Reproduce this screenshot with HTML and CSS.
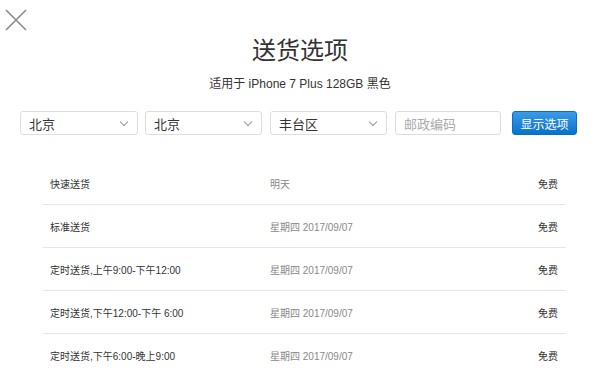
FILE: index.html
```html
<!DOCTYPE html>
<html lang="zh-CN">
<head>
  <meta charset="UTF-8" />
  <title>送货选项</title>
  <link rel="stylesheet" href="styles.css">
</head>
<body>
  <a class="close" href="#" aria-label="关闭">
    <svg width="22" height="22" viewBox="0 0 22 22">
      <path d="M1 1 L21 21 M21 1 L1 21" stroke="#8a8a8a" stroke-width="1.6" fill="none" />
    </svg>
  </a>

  <h1>送货选项</h1>
  <p class="sub">适用于 iPhone 7 Plus 128GB 黑色</p>

  <div class="form">
    <div class="select w1"><span>北京</span><i class="chev"></i></div>
    <div class="select w2"><span>北京</span><i class="chev"></i></div>
    <div class="select w2 w3"><span>丰台区</span><i class="chev"></i></div>
    <div class="input">邮政编码</div>
    <button class="btn">显示选项</button>
  </div>

  <table>
    <tbody>
      <tr><td>快速送货</td><td class="date">明天</td><td class="fee">免费</td></tr>
      <tr><td>标准送货</td><td class="date">星期四 2017/09/07</td><td class="fee">免费</td></tr>
      <tr><td>定时送货,上午9:00-下午12:00</td><td class="date">星期四 2017/09/07</td><td class="fee">免费</td></tr>
      <tr><td>定时送货,下午12:00-下午 6:00</td><td class="date">星期四 2017/09/07</td><td class="fee">免费</td></tr>
      <tr><td>定时送货,下午6:00-晚上9:00</td><td class="date">星期四 2017/09/07</td><td class="fee">免费</td></tr>
    </tbody>
  </table>
</body>
</html>
```

FILE: styles.css
```css
body {
  margin: 0;
  font-family: "Liberation Sans", "Noto Sans CJK SC", sans-serif;
  color: #333;
  background: #fff;
}
.close {
  position: absolute;
  left: 5px;
  top: 9px;
  width: 22px;
  height: 22px;
}
h1 {
  margin: 36px 0 0;
  font-size: 24px;
  line-height: 30px;
  font-weight: normal;
  text-align: center;
  color: #333;
}
.sub {
  margin: 10px 0 0;
  font-size: 12px;
  line-height: 16px;
  text-align: center;
  color: #333;
}
.form {
  display: flex;
  gap: 7px;
  margin: 19px 0 0 20px;
  height: 24px;
}
.select, .input {
  box-sizing: border-box;
  height: 24px;
  border: 1px solid #ddd;
  border-radius: 3px;
  display: flex;
  align-items: center;
  padding: 0 8px;
  font-size: 13px;
}
.select { justify-content: space-between; }
.w1 { width: 118px; }
.w2 { width: 117px; }
.w3 { margin-left: 1px; }
.input { width: 106px; margin-left: 1px; color: #aaa; }
.chev {
  width: 5px;
  height: 5px;
  border-right: 1px solid #999;
  border-bottom: 1px solid #999;
  transform: rotate(45deg);
  margin: -3px 2px 0 0;
}
.btn {
  margin-left: 4px;
  width: 65px;
  height: 24px;
  border: 1px solid #0a6ec4;
  border-radius: 3px;
  background: linear-gradient(#3b9be6, #0a71cb);
  color: #fff;
  font-family: inherit;
  font-size: 12px;
  padding: 0;
}
table {
  border-collapse: collapse;
  width: 523px;
  margin: 27px 0 0 43px;
  font-size: 10px;
}
td {
  height: 42px;
  padding: 0 0 0 7px;
  border-bottom: 1px solid #e6e6e6;
  text-align: left;
}
tr:last-child td { border-bottom: none; }
td:first-child { width: 213px; }
.date { color: #888; }
.fee { text-align: right; padding-right: 8px; }
```
